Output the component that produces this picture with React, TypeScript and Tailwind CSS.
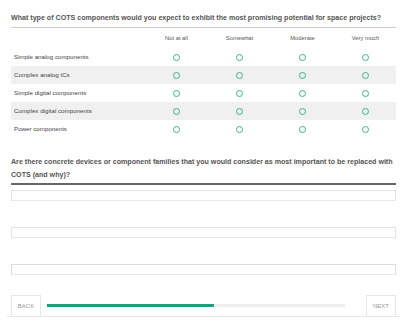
const options = ['Not at all', 'Somewhat', 'Moderate', 'Very much'];
const rows = [
  'Simple analog components',
  'Complex analog ICs',
  'Simple digital components',
  'Complex digital components',
  'Power components',
];

function Radio() {
  return <span className="block w-[7px] h-[7px] rounded-full border-[1.5px] border-[#3db38d]" />;
}

export default function App() {
  return (
    <div className="w-[407px] h-[330px] bg-white font-['Liberation_Sans',Arial,sans-serif] overflow-hidden">
      <div className="px-[11px] pt-[13px]">
        {/* question 1 */}
        <div className="text-[7.1px] font-bold text-[#555] leading-[11px] pb-[3px] border-b border-[#ccc] whitespace-nowrap">
          What type of COTS components would you expect to exhibit the most promising potential for space projects?
        </div>

        <div className="mt-[1px]">
          <div className="grid grid-cols-[134px_repeat(4,63px)] h-[19px] items-center text-[5.8px] text-[#555]">
            <div />
            {options.map((o) => (
              <div key={o} className="text-center">{o}</div>
            ))}
          </div>
          {rows.map((r, i) => (
            <div
              key={r}
              className={`grid grid-cols-[134px_repeat(4,63px)] h-[18px] items-center ${i % 2 === 1 ? 'bg-[#f0f0f0]' : ''}`}
            >
              <div className="pl-[3px] text-[6.2px] text-[#444]">{r}</div>
              {options.map((o) => (
                <div key={o} className="flex justify-center">
                  <Radio />
                </div>
              ))}
            </div>
          ))}
        </div>

        {/* question 2 */}
        <div className="mt-[18px] text-[7.1px] font-bold text-[#555] leading-[13px] pb-[1px] border-b-2 border-[#666]">
          Are there concrete devices or component families that you would consider as most important to be replaced with COTS (and why)?
        </div>

        <div className="mt-[5px] flex flex-col gap-[26px]">
          <div className="h-[11px] border border-[#e3e3e3] border-b-[#e6e9ef]" />
          <div className="h-[11px] border border-[#e3e3e3] border-b-[#e6e9ef]" />
          <div className="h-[11px] border border-[#dcdce0] border-b-[#e6e9ef]" />
        </div>
      </div>

      {/* navigation */}
      <div className="mt-[20px] mx-[7px] border-b border-[#e8e8e8]">
        <div className="mx-[4px] flex items-center h-[21px]">
          <div className="w-[30px] h-full border border-[#e6e6e6] border-b-0 flex items-center justify-center text-[6px] text-[#999]">
            BACK
          </div>
          <div className="ml-[6px] w-[298px] h-[3px] bg-[#eeeeee]">
            <div className="h-full bg-[#1f9e7b]" style={{ width: '56%' }} />
          </div>
          <div className="flex-1" />
          <div className="w-[30px] h-full border border-[#e6e6e6] border-b-0 flex items-center justify-center text-[6px] text-[#999]">
            NEXT
          </div>
        </div>
      </div>
    </div>
  );
}
